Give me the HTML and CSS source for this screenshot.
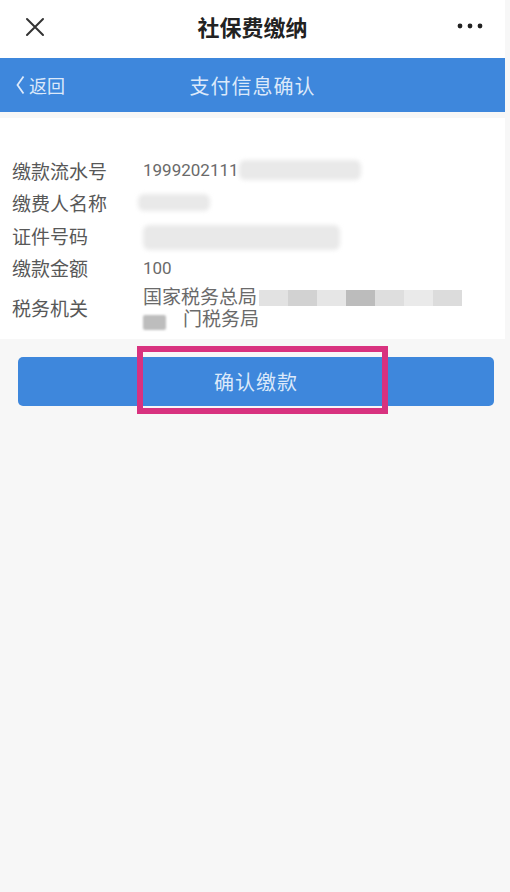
FILE: index.html
```html
<!DOCTYPE html>
<html lang="zh-CN">
<head>
    <meta charset="UTF-8">
    <meta name="viewport" content="width=device-width, initial-scale=1.0">
    <title>社保费缴纳</title>
    <link rel="stylesheet" href="styles.css">
</head>
<body>
    <div class="topbar">
        <svg class="close-icon" width="20" height="20" viewBox="0 0 20 20">
            <path d="M2 2 L18 18 M18 2 L2 18" stroke="#333" stroke-width="2" fill="none" stroke-linecap="round"/>
        </svg>
        <div class="topbar-title">社保费缴纳</div>
        <svg class="more-icon" width="26" height="6" viewBox="0 0 26 6">
            <circle cx="3" cy="3" r="2.4" fill="#222"/>
            <circle cx="13" cy="3" r="2.4" fill="#222"/>
            <circle cx="23" cy="3" r="2.4" fill="#222"/>
        </svg>
    </div>

    <div class="navbar">
        <div class="back">
            <svg width="9" height="20" viewBox="0 0 9 20">
                <polyline points="7.5,1.5 1.5,10 7.5,18.5" stroke="#dce9fa" stroke-width="1.8" fill="none"/>
            </svg>
            <span>返回</span>
        </div>
        <div class="navbar-title">支付信息确认</div>
    </div>

    <div class="info-card">
        <div class="info-row">
            <div class="label">缴款流水号</div>
            <div class="value"><span class="num">1999202111</span><span class="mask mask-serial"></span></div>
        </div>
        <div class="info-row">
            <div class="label">缴费人名称</div>
            <div class="value"><span class="mask mask-name"></span></div>
        </div>
        <div class="info-row">
            <div class="label">证件号码</div>
            <div class="value"><span class="mask mask-id"></span></div>
        </div>
        <div class="info-row">
            <div class="label">缴款金额</div>
            <div class="value"><span class="num">100</span></div>
        </div>
        <div class="info-row tall">
            <div class="label">税务机关</div>
            <div class="value multi">
                <div class="line">国家税务总局<span class="mosaic">
                    <i class="m1"></i><i class="m2"></i><i class="m3"></i><i class="m4"></i><i class="m5"></i><i class="m6"></i><i class="m7"></i>
                </span></div>
                <div class="line"><span class="mask mask-city"></span><span class="gap"></span>门税务局</div>
            </div>
        </div>
    </div>

    <div class="actions">
        <button class="confirm-btn">确认缴款</button>
        <div class="highlight"></div>
    </div>
</body>
</html>
```

FILE: styles.css
```css
body {
    margin: 0;
    background-color: #f7f7f7;
    font-family: Roboto, "Noto Sans CJK SC", sans-serif;
    color: #555;
}
.topbar {
    height: 58px;
    margin-right: 5px;
    background-color: #fff;
    display: flex;
    align-items: center;
    justify-content: space-between;
    padding: 0 22px 0 25px;
    position: relative;
}
.close-icon {
    margin-top: -4px;
}
.topbar-title {
    position: absolute;
    left: 0;
    right: 0;
    text-align: center;
    font-size: 22px;
    font-weight: 700;
    color: #222;
    margin-top: -6px;
    pointer-events: none;
}
.more-icon {
    margin-top: -6px;
}
.navbar {
    height: 54px;
    margin-right: 5px;
    background-color: #3e87dc;
    display: flex;
    align-items: center;
    position: relative;
    color: #dce9fa;
}
.back {
    display: flex;
    align-items: center;
    gap: 4px;
    padding-left: 16px;
    font-size: 18px;
}
.navbar-title {
    position: absolute;
    left: 0;
    right: 0;
    text-align: center;
    font-size: 20px;
    letter-spacing: 1px;
    pointer-events: none;
}
.info-card {
    margin: 6px 5px 0 0;
    background-color: #fff;
    padding: 36px 0 9px 12px;
}
.info-row {
    display: flex;
    align-items: center;
    height: 32.5px;
}
.info-row.tall {
    height: 46px;
}
.label {
    width: 131px;
    flex-shrink: 0;
    font-size: 19px;
    color: #585858;
}
.value {
    font-size: 19px;
    color: #6a6a6a;
    display: flex;
    align-items: center;
}
.num {
    font-size: 17px;
}
.value.multi {
    display: block;
    line-height: 22px;
    margin-top: 3px;
}
.line {
    display: flex;
    align-items: center;
    height: 22px;
}
.mask {
    display: inline-block;
    background-color: #e9e9e9;
    border-radius: 6px;
    filter: blur(2px);
}
.mask-serial {
    width: 122px;
    height: 20px;
}
.mask-name {
    width: 72px;
    height: 17px;
    margin-left: -5px;
}
.mask-id {
    width: 197px;
    height: 25px;
    margin-top: 4px;
}
.mask-city {
    width: 23px;
    height: 15px;
    background-color: #bdbdbd;
    border-radius: 2px;
    filter: blur(1px);
    margin-top: 6px;
}
.gap {
    width: 17px;
}
.mosaic {
    display: flex;
    margin-left: 2px;
    height: 16px;
    filter: blur(0.6px);
}
.mosaic i {
    display: block;
    height: 16px;
    width: 29px;
}
.m1 { background-color: #e2e2e2; }
.m2 { background-color: #d2d2d2; }
.m3 { background-color: #e6e6e6; }
.m4 { background-color: #bcbcbc; }
.m5 { background-color: #dedede; }
.m6 { background-color: #eaeaea; }
.m7 { background-color: #dcdcdc; }
.actions {
    position: relative;
    padding: 18px 16px 12px 18px;
}
.confirm-btn {
    display: block;
    width: 100%;
    height: 49px;
    border: none;
    border-radius: 5px;
    background-color: #3e87dc;
    color: #dce9fa;
    font-family: inherit;
    font-size: 20px;
    letter-spacing: 1px;
}
.highlight {
    position: absolute;
    left: 137px;
    top: 7px;
    width: 251px;
    height: 68px;
    box-sizing: border-box;
    border: 6px solid #d8327f;
}
```
